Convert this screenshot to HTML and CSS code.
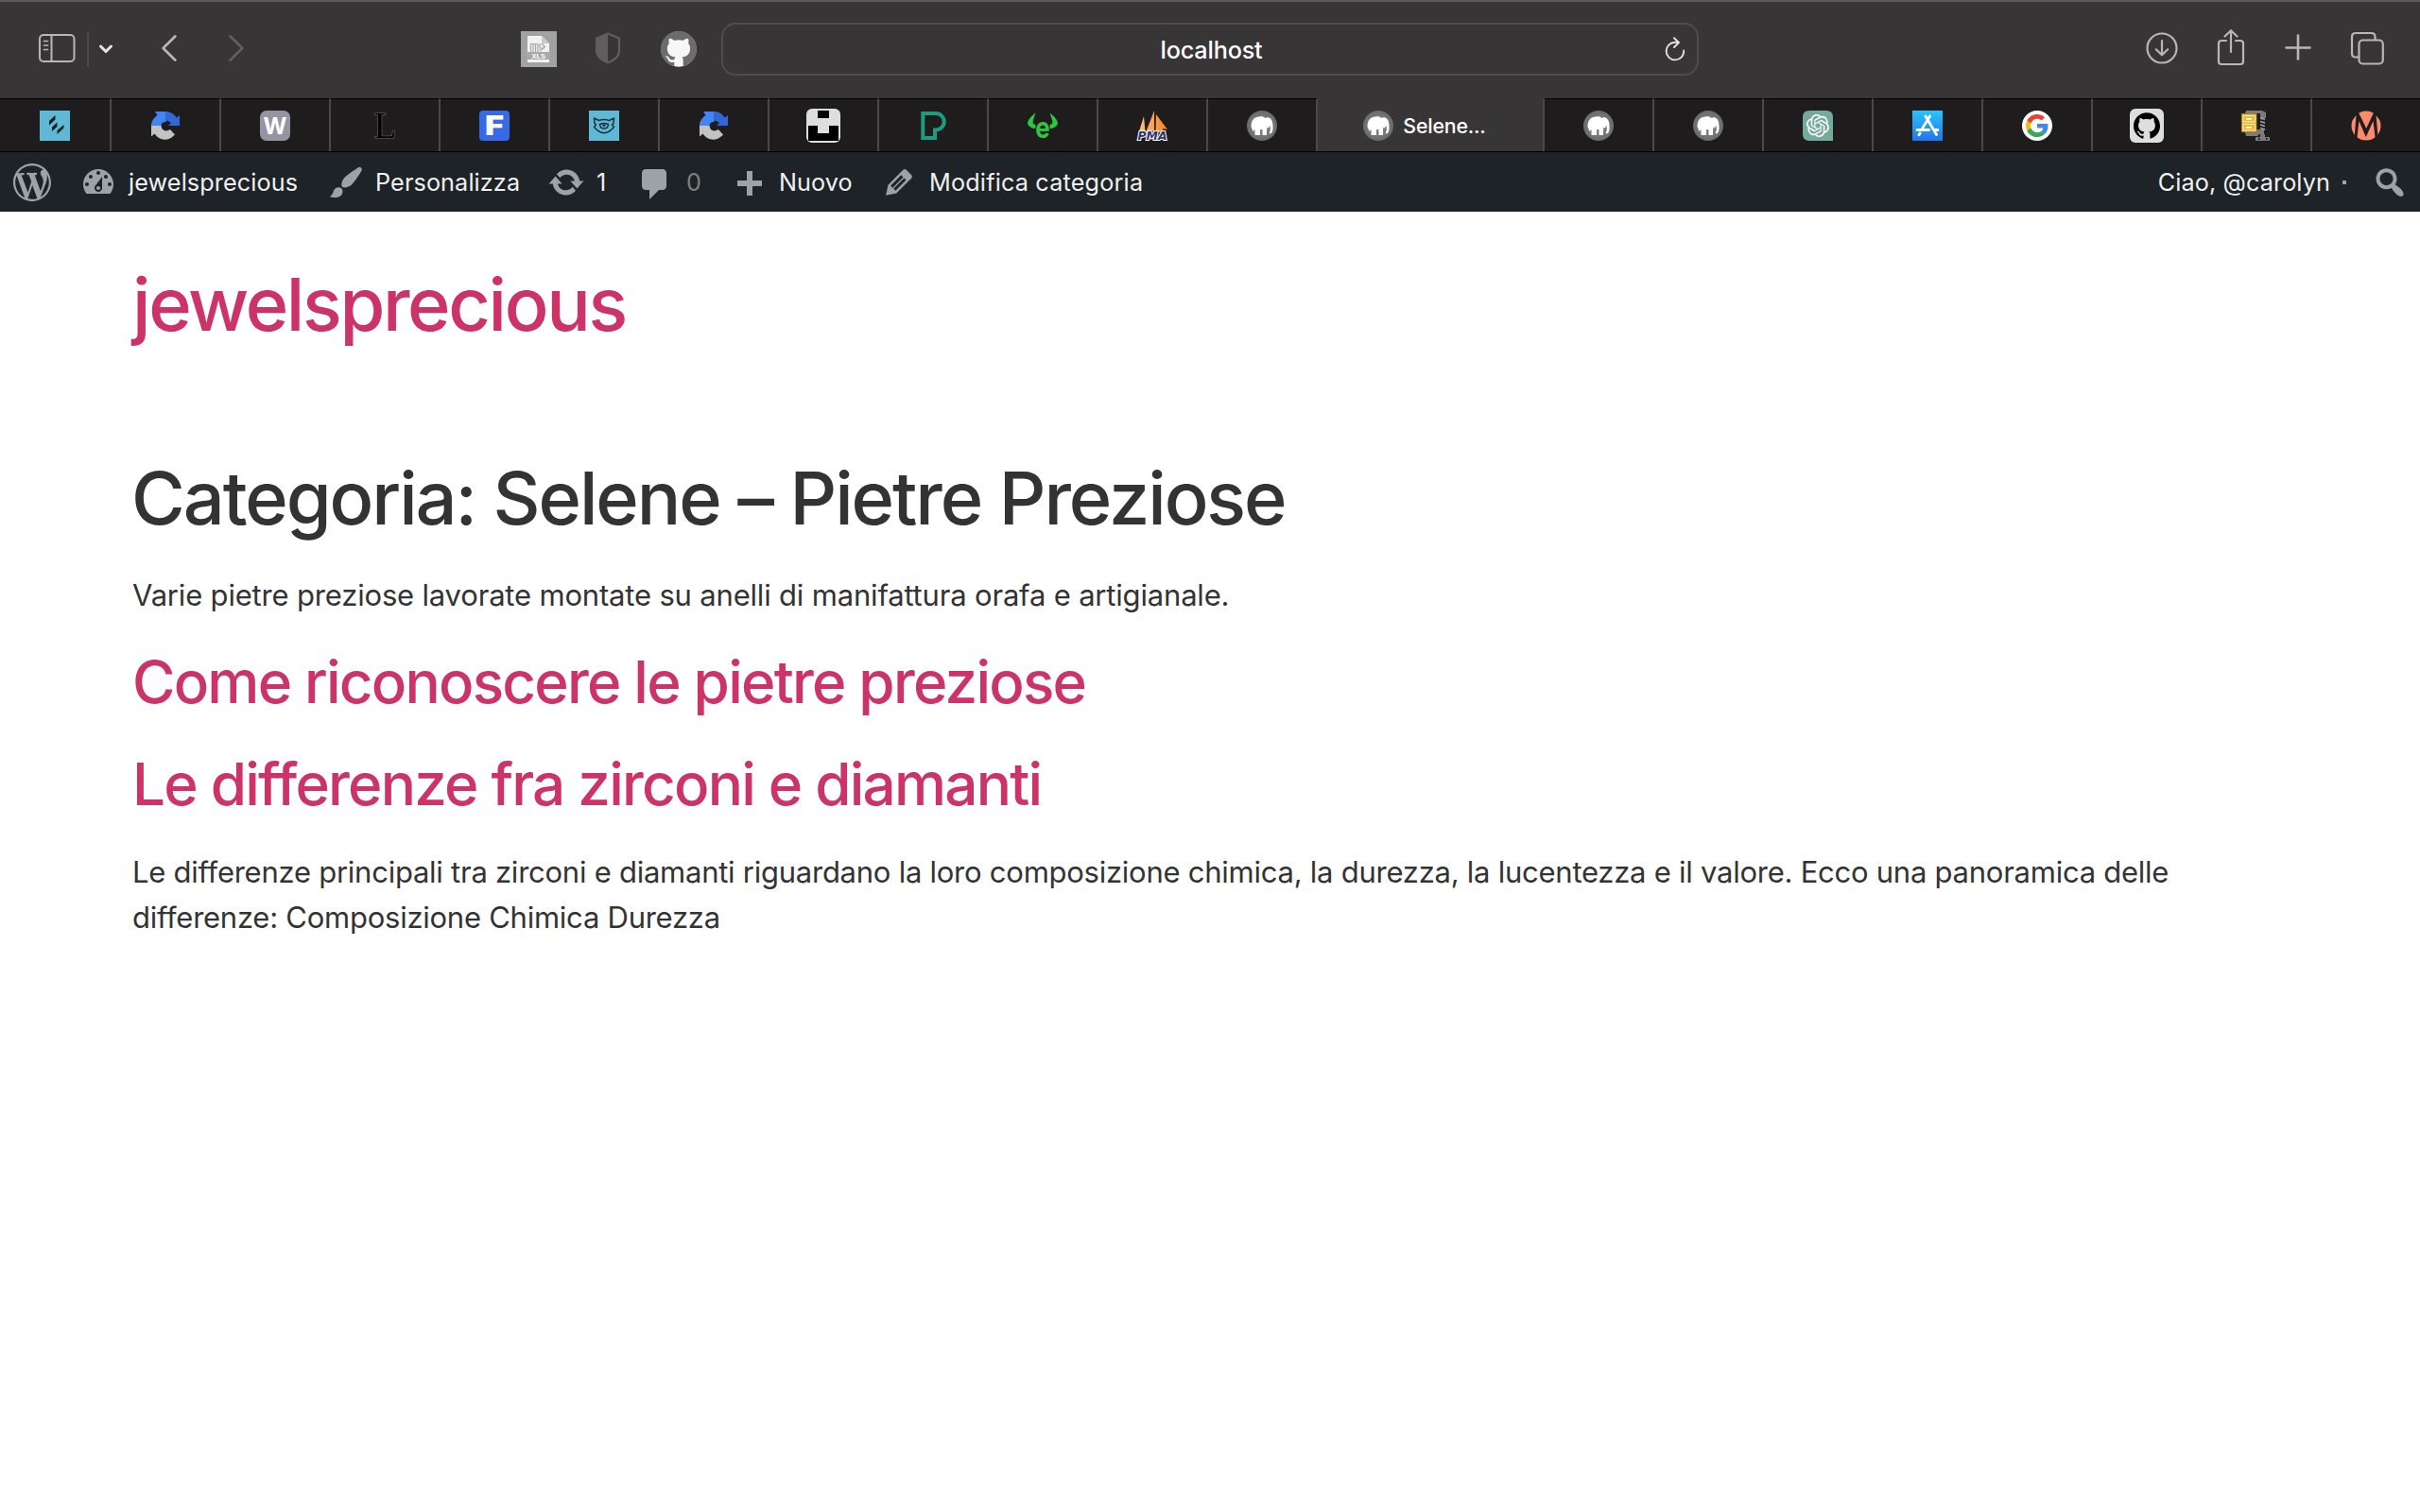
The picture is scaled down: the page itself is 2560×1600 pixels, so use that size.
FILE: index.html
```html
<!DOCTYPE html>
<html lang="it">
<head>
<meta charset="utf-8">
<title>Selene – Pietre Preziose</title>
<link rel="stylesheet" href="styles.css">
</head>
<body>
<svg class="sprite" width="0" height="0" aria-hidden="true">
  <defs>
    <radialGradient id="disc" cx=".5" cy=".5" r=".5"><stop offset=".3" stop-color="#858585"/><stop offset="1" stop-color="#6a6a6a"/></radialGradient>
    <linearGradient id="sky" x1="0" y1="0" x2="0" y2="1"><stop offset="0" stop-color="#2ac4fb"/><stop offset="1" stop-color="#2374ee"/></linearGradient>
    <linearGradient id="sail" x1="0" y1="0" x2="1" y2="0"><stop offset="0" stop-color="#fbc27a"/><stop offset="1" stop-color="#f7811e"/></linearGradient>
    <clipPath id="round"><circle cx="16" cy="16" r="15.5"/></clipPath>
  </defs>
  <symbol id="cycle" viewBox="0 0 32 32">
    <path fill="#4285f4" d="M5 1H16V12A4.6 4.6 0 0 0 11.5 16H1C1 11.500 3.500 7.500 7.500 5z"/>
    <path fill="#3367d6" d="M16 1C21 1 25 3.200 27.600 7.500L31 5V16H19L22 13L18 10.500L16 12z"/>
    <path fill="#c3c3c3" d="M1 16H11.500C11.800 20 14.500 22 18 21.300L21 20L26 25.500C19 33.500 9 31.500 4.500 24.500L1 27.500z"/>
  </symbol>
  <symbol id="elephant" viewBox="0 0 32 32">
    <circle cx="16" cy="16" r="16" fill="url(#disc)"/>
    <path fill="#fff" d="M4.500 17C4.500 10 8 6.500 13 6.500C15.500 6 18 6.300 19.500 8C23 6 27 9 27.300 14C27.700 18 28 22 25.700 24C24.500 25 23.300 24 24 22.700C25.300 21 25 18 24.300 15.500C23.700 18.500 22 19 21 18V26H16.500V20H14V26H8.500V20L6.500 22z"/>
  </symbol>
  <symbol id="octocat" viewBox="0 0 24 24">
    <path d="M12 .297c-6.63 0-12 5.373-12 12 0 5.303 3.438 9.8 8.205 11.385.6.113.82-.258.82-.577 0-.285-.01-1.04-.015-2.04-3.338.724-4.042-1.61-4.042-1.61C4.422 18.07 3.633 17.7 3.633 17.7c-1.087-.744.084-.729.084-.729 1.205.084 1.838 1.236 1.838 1.236 1.07 1.835 2.809 1.305 3.495.998.108-.776.417-1.305.76-1.605-2.665-.3-5.466-1.332-5.466-5.93 0-1.31.465-2.38 1.235-3.22-.135-.303-.54-1.523.105-3.176 0 0 1.005-.322 3.3 1.23.96-.267 1.98-.399 3-.405 1.02.006 2.04.138 3 .405 2.28-1.552 3.285-1.23 3.285-1.23.645 1.653.24 2.873.12 3.176.765.84 1.23 1.91 1.23 3.22 0 4.61-2.805 5.625-5.475 5.92.42.36.81 1.096.81 2.22 0 1.606-.015 2.896-.015 3.286 0 .315.21.69.825.57C20.565 22.092 24 17.592 24 12.297c0-6.627-5.373-12-12-12"/>
  </symbol>
</svg>

<header class="toolbar">
  <div class="tools tools-left">
    <svg class="i-sidebar" width="40" height="32" viewBox="0 0 40 32" fill="none" stroke="#b9b6b7" stroke-width="2"><rect x="2" y="2" width="36.500" height="28" rx="4"/><path d="M14.500 2V30"/><path stroke-width="1.700" stroke-linecap="round" d="M6.500 8.500H10.500M6.500 13H10.500M6.500 17.500H10.500"/></svg>
    <span class="divider"></span>
    <svg class="i-down" width="16" height="12" viewBox="0 0 16 12" fill="none" stroke="#e6e4e5" stroke-width="3" stroke-linecap="round" stroke-linejoin="round"><path d="M2.500 3L8 8.500L13.500 3"/></svg>
    <svg class="i-back" width="18" height="30" viewBox="0 0 18 30" fill="none" stroke="#b9b6b7" stroke-width="2.600" stroke-linecap="round" stroke-linejoin="round"><path d="M15.500 2.300L2.600 15L15.500 27.700"/></svg>
    <svg class="i-forward" width="18" height="30" viewBox="0 0 18 30" fill="none" stroke="#605e5f" stroke-width="2.600" stroke-linecap="round" stroke-linejoin="round"><path d="M2.500 2.300L15.400 15L2.500 27.700"/></svg>
    <svg class="i-xls" width="38" height="38" viewBox="0 0 38 38"><path fill="#a2a2a2" d="M0 0H38V38H0z"/><path fill="#f2f2f2" d="M7 5H22L30 13V33H7z"/><path fill="#c9c9c9" d="M22 5L30 13H22z"/><path fill="none" stroke="#a8a8a8" stroke-width="1.200" d="M10.500 22V13.500H18V22M13 14V22M15.500 14V22M20 14H24V18H20zM20 21L26 16"/><path fill="#a9a9a9" d="M6 22H31V30H6z"/><text x="18.700" y="29" text-anchor="middle" class="t-xls">XLS</text></svg>
    <svg class="i-shield" width="28" height="34" viewBox="0 0 28 34"><path fill="none" stroke="#5f5d5e" stroke-width="2.200" stroke-linejoin="round" d="M14 1.500L26 6.500V20C26 26 20 30 14 32.200C8 30 2 26 2 20V6.500z"/><path fill="#5f5d5e" d="M14 1.500V32.200C8 30 2 26 2 20V6.500z"/></svg>
    <svg class="i-git" width="38" height="38" viewBox="0 0 38 38"><circle cx="19" cy="19" r="18.700" fill="#f7f7f7"/><use href="#octocat" x="0" y="-.5" width="38" height="38" fill="#6d6b6c"/></svg>
  </div>
  <div class="address">
    <span class="address-text">localhost</span>
    <svg class="i-reload" width="24" height="28" viewBox="0 0 24 28" fill="none" stroke="#e2e0e1" stroke-width="1.900" stroke-linecap="round" stroke-linejoin="round"><path d="M21.200 15.500A9.300 9.300 0 1 1 11.900 6.800H15.800M11 2.200L16 7L11 12"/></svg>
  </div>
  <div class="tools tools-right">
    <svg class="i-download" width="34" height="34" viewBox="0 0 34 34" fill="none" stroke="#b9b6b7" stroke-width="2.200" stroke-linecap="round" stroke-linejoin="round"><circle cx="17" cy="17" r="15.500"/><path d="M17 9V24M10.800 18.300L17 24.300L23.200 18.300"/></svg>
    <svg class="i-share" width="30" height="40" viewBox="0 0 30 40" fill="none" stroke="#b9b6b7" stroke-width="2.200" stroke-linecap="round" stroke-linejoin="round"><path d="M10 13H5Q2 13 2 16V35Q2 38 5 38H25Q28 38 28 35V16Q28 13 25 13H20M15 25V2.500M8.500 8.500L15 2.200L21.500 8.500"/></svg>
    <svg class="i-plus" width="28" height="28" viewBox="0 0 28 28" fill="none" stroke="#b9b6b7" stroke-width="2.600" stroke-linecap="round"><path d="M14 1.500V26.500M1.500 14.500H26.500"/></svg>
    <svg class="i-tabs" width="36" height="36" viewBox="0 0 36 36" fill="none" stroke="#b9b6b7" stroke-width="2.200"><rect x="9.500" y="9.500" width="25.300" height="25" rx="4"/><path d="M9.500 27.500H6Q2 27.500 2 23.500V6Q2 2 6 2H22.500Q26.500 2 26.500 6V9.500"/></svg>
  </div>
</header>

<nav class="tabs">
  <div class="tab first"><svg class="fav" viewBox="0 0 32 32"><path fill="#5fb9d4" d="M0 0H32V32H0z"/><path fill="#1d1f22" d="M10 11L16.500 5V9.500L10 15.500zM13 17.500L18.500 12.500V17L13 22zM18.500 21L25.500 15V18.500L18.500 25z"/></svg></div>
  <div class="tab"><svg class="fav"><use href="#cycle"/></svg></div>
  <div class="tab"><svg class="fav" viewBox="0 0 32 32"><rect width="32" height="32" rx="7" fill="#9494a2"/><text x="16" y="25" text-anchor="middle" class="t-w">W</text></svg></div>
  <div class="tab"><svg class="fav" viewBox="0 0 32 32"><text x="16.500" y="29" text-anchor="middle" class="t-l">L</text></svg></div>
  <div class="tab"><svg class="fav" viewBox="0 0 32 32"><rect width="32" height="32" rx="4" fill="#356be6"/><text x="16" y="26" text-anchor="middle" class="t-f" textLength="20" lengthAdjust="spacingAndGlyphs">F</text></svg></div>
  <div class="tab"><svg class="fav" viewBox="0 0 32 32"><path fill="#5fb9d4" d="M0 0H32V32H0z"/><path fill="none" stroke="#20343b" stroke-width="1.600" stroke-linejoin="round" d="M5.500 8L10.500 10.500Q16 8.500 21.500 10.500L26.500 8L26 13.500L24.500 15L26.500 17.500L24 20Q16 27.500 8 20L5.500 17.500L7.500 15L6 13.500zM11.500 14.500Q16 12.500 20.500 14.500Q20 19 16 19Q12 19 11.500 14.500z"/><path fill="#20343b" d="M13.500 14.500H18.500L16 17.500z"/></svg></div>
  <div class="tab"><svg class="fav"><use href="#cycle"/></svg></div>
  <div class="tab"><svg class="fav big" viewBox="0 0 36 36"><rect width="36" height="36" rx="6" fill="#dedede"/><path d="M12 2H24V10H12zM2 18H12V26H24V18H34V34H2z"/></svg></div>
  <div class="tab"><svg class="fav" viewBox="0 0 32 32"><path fill="none" stroke="#1d9d80" stroke-width="4" d="M5.300 3H19A8.600 8.600 0 0 1 19 20.500H18V29H5.300z"/></svg></div>
  <div class="tab"><svg class="fav" viewBox="0 0 32 32" fill="#2ac840"><path d="M8.500 2.500C4 6 0 10 0 14C1.500 17.500 4.500 19 8.500 19V15Q4.500 14.500 6 10zM23.500 2.500C28 6 32 10 32 14C30.500 17.500 27.500 19 23.500 19V15Q27.500 14.500 26 10z"/><text x="16" y="28.500" text-anchor="middle" class="t-e" textLength="15.500" lengthAdjust="spacingAndGlyphs">e</text></svg></div>
  <div class="tab"><svg class="fav" viewBox="0 0 32 32"><path fill="url(#sail)" d="M7 6L8.500 22H2zM18 0V22H9.500zM20 4L32 20L27 19L28 23H19.500z"/><text x="16" y="31" text-anchor="middle" class="t-pma" textLength="31" lengthAdjust="spacingAndGlyphs">PMA</text></svg></div>
  <div class="tab"><svg class="fav"><use href="#elephant"/></svg></div>
  <div class="tab active"><svg class="fav"><use href="#elephant"/></svg><span class="tab-title">Selene...</span></div>
  <div class="tab"><svg class="fav"><use href="#elephant"/></svg></div>
  <div class="tab"><svg class="fav"><use href="#elephant"/></svg></div>
  <div class="tab"><svg class="fav" viewBox="0 0 32 32"><path fill="#74aa9c" d="M7 0H25Q32 0 32 7V32H7Q0 32 0 25V7Q0 0 7 0z"/><svg x="4" y="4" width="24" height="24" viewBox="0 0 24 24"><path fill="#fff" d="M22.2819 9.8211a5.9847 5.9847 0 0 0-.5157-4.9108 6.0462 6.0462 0 0 0-6.5098-2.9A6.0651 6.0651 0 0 0 4.9807 4.1818a5.9847 5.9847 0 0 0-3.9977 2.9 6.0462 6.0462 0 0 0 .7427 7.0966 5.98 5.98 0 0 0 .511 4.9107 6.051 6.051 0 0 0 6.5146 2.9001A5.9847 5.9847 0 0 0 13.2599 24a6.0557 6.0557 0 0 0 5.7718-4.2058 5.9894 5.9894 0 0 0 3.9977-2.9001 6.0557 6.0557 0 0 0-.7475-7.0729zm-9.022 12.6081a4.4755 4.4755 0 0 1-2.8764-1.0408l.1419-.0804 4.7783-2.7582a.7948.7948 0 0 0 .3927-.6813v-6.7369l2.02 1.1686a.071.071 0 0 1 .038.052v5.5826a4.504 4.504 0 0 1-4.4945 4.4944zm-9.6607-4.1254a4.4708 4.4708 0 0 1-.5346-3.0137l.142.0852 4.783 2.7582a.7712.7712 0 0 0 .7806 0l5.8428-3.3685v2.3324a.0804.0804 0 0 1-.0332.0615L9.74 19.9502a4.4992 4.4992 0 0 1-6.1408-1.6464zM2.3408 7.8956a4.485 4.485 0 0 1 2.3655-1.9728V11.6a.7664.7664 0 0 0 .3879.6765l5.8144 3.3543-2.0201 1.1685a.0757.0757 0 0 1-.071 0l-4.8303-2.7865A4.504 4.504 0 0 1 2.3408 7.872zm16.5963 3.8558L13.1038 8.364 15.1192 7.2a.0757.0757 0 0 1 .071 0l4.8303 2.7913a4.4944 4.4944 0 0 1-.6765 8.1042v-5.6772a.79.79 0 0 0-.407-.667zm2.0107-3.0231l-.142-.0852-4.7735-2.7818a.7759.7759 0 0 0-.7854 0L9.409 9.2297V6.8974a.0662.0662 0 0 1 .0284-.0615l4.8303-2.7866a4.4992 4.4992 0 0 1 6.6802 4.66zM8.3065 12.863l-2.02-1.1638a.0804.0804 0 0 1-.038-.0567V6.0742a4.4992 4.4992 0 0 1 7.3757-3.4537l-.142.0805L8.704 5.459a.7948.7948 0 0 0-.3927.6813zm1.0976-2.3654l2.602-1.4998 2.6069 1.4998v2.9994l-2.5974 1.4997-2.6067-1.4997Z"/></svg></svg></div>
  <div class="tab"><svg class="fav" viewBox="0 0 32 32"><path fill="url(#sky)" d="M0 0H32V32H0z"/><path fill="none" stroke="#fff" stroke-width="2.800" stroke-linecap="round" d="M18.500 6L9.500 20.500M14 6L25.500 25.500M5 20.500H17.500M22.500 20.500H27M8 24L7 25.700"/></svg></div>
  <div class="tab"><svg class="fav" viewBox="0 0 32 32"><circle cx="16" cy="16" r="16" fill="#fff"/><svg x="4" y="4" width="24" height="24" viewBox="0 0 48 48"><path fill="#EA4335" d="M24 9.500c3.540 0 6.710 1.220 9.210 3.600l6.850-6.850C35.900 2.380 30.470 0 24 0 14.620 0 6.510 5.380 2.560 13.220l7.980 6.190C12.430 13.720 17.740 9.500 24 9.500z"/><path fill="#4285F4" d="M46.980 24.550c0-1.570-.15-3.090-.38-4.550H24v9.020h12.940c-.58 2.960-2.260 5.480-4.780 7.180l7.730 6c4.510-4.180 7.090-10.360 7.090-17.650z"/><path fill="#FBBC05" d="M10.530 28.590c-.48-1.450-.76-2.990-.76-4.590s.27-3.140.76-4.590l-7.980-6.190C.92 16.460 0 20.120 0 24c0 3.880.92 7.540 2.560 10.780l7.970-6.190z"/><path fill="#34A853" d="M24 48c6.480 0 11.930-2.130 15.890-5.810l-7.730-6c-2.150 1.450-4.920 2.300-8.160 2.300-6.260 0-11.570-4.220-13.470-9.910l-7.980 6.190C6.510 42.620 14.620 48 24 48z"/></svg></svg></div>
  <div class="tab"><svg class="fav big" viewBox="0 0 36 36"><rect width="36" height="36" rx="6" fill="#dedede"/><use href="#octocat" x="4" y="4" width="28" height="28"/></svg></div>
  <div class="tab"><svg class="fav" viewBox="0 0 32 32"><path fill="#7b7b7b" d="M5 0H22L26 2V8H20V3H4zM4 23H16V20H24V25H19L17 27H5zM20 25H25V28H30V32H15V28H20z"/><path stroke="#a5a5a5" stroke-width="1.500" d="M20 8L25 9.500M20 11.500L25 13M20 15L25 16.500M20 18.500L25 20"/><path fill="#edb82e" stroke="#b98a1c" stroke-width=".8" d="M.4 3.400H16V22.600H.4z"/><path fill="none" stroke="#fff0bd" stroke-width="1" d="M1.800 5.500H14.500V12H1.800zM1.800 14.500H14.500V21H1.800z"/><path fill="#fff" d="M5 8H11V9.800H5zM5 17H11V18.800H5z"/><path fill="#1f1c1d" d="M18 29H19.500V31H18zM26 29H27.500V31H26z"/></svg></div>
  <div class="tab last"><svg class="fav" viewBox="0 0 32 32"><g clip-path="url(#round)" fill="#fb8b6c"><path d="M7 0H25L16.200 19zM8.500 11L15.800 28L23.500 11L26 32H6zM0 32V12L5.500 5L3.800 27zM32 32V12L26.500 5L28.500 27z"/></g></svg></div>
</nav>

<div class="adminbar">
  <a class="ab ab-logo"><svg class="dash" viewBox="0 0 20 20"><path d="M20 10c0-5.510-4.490-10-10-10C4.480 0 0 4.490 0 10c0 5.520 4.480 10 10 10 5.510 0 10-4.480 10-10zM7.780 15.370L4.370 6.220c.55-.02 1.170-.08 1.170-.08.5-.06.44-1.130-.06-1.110 0 0-1.450.11-2.370.11-.18 0-.37 0-.58-.01C4.120 2.690 6.870 1.110 10 1.110c2.330 0 4.450.87 6.050 2.340-.68-.11-1.650.39-1.650 1.580 0 .74.45 1.360.9 2.100.35.61.55 1.360.55 2.460 0 1.490-1.400 5-1.400 5l-3.030-8.370c.54-.02.82-.17.82-.17.5-.05.44-1.250-.06-1.220 0 0-1.440.12-2.380.12-.87 0-2.330-.12-2.330-.12-.5-.03-.56 1.200-.06 1.220l.92.08 1.260 3.410zM17.410 10c.24-.64.74-1.870.43-4.250.7 1.290 1.050 2.710 1.050 4.250 0 3.290-1.730 6.240-4.400 7.780.97-2.590 1.940-5.200 2.920-7.780zM6.100 18.090C3.120 16.650 1.110 13.530 1.110 10c0-1.300.23-2.480.72-3.590C3.250 10.300 4.670 14.200 6.100 18.090zM10.130 11.460l2.580 6.980c-.86.29-1.760.45-2.710.45-.79 0-1.570-.11-2.290-.33.81-2.380 1.620-4.740 2.420-7.100z"/></svg></a>
  <a class="ab ab-site"><svg class="dash" viewBox="0 0 20 20"><path fill-rule="evenodd" d="M3.760 16h12.480c1.100-1.370 1.760-3.110 1.760-5 0-4.420-3.580-8-8-8s-8 3.580-8 8c0 1.890.66 3.630 1.760 5zM10 4c.55 0 1 .45 1 1s-.45 1-1 1-1-.45-1-1 .45-1 1-1zM6 6c.55 0 1 .45 1 1s-.45 1-1 1-1-.45-1-1 .45-1 1-1zm8 0c.55 0 1 .45 1 1s-.45 1-1 1-1-.45-1-1 .45-1 1-1zm-5.370 5.550L12 7v6c0 1.100-.9 2-2 2s-2-.9-2-2c0-.57.24-1.080.63-1.450zM4 10c.55 0 1 .45 1 1s-.45 1-1 1-1-.45-1-1 .45-1 1-1zm12 0c.55 0 1 .45 1 1s-.45 1-1 1-1-.45-1-1 .45-1 1-1zm-5 3c0-.55-.45-1-1-1s-1 .45-1 1 .45 1 1 1 1-.45 1-1z"/></svg><span>jewelsprecious</span></a>
  <a class="ab ab-custom"><svg class="dash" viewBox="0 0 20 20"><path d="M18.330 3.570s.27-.8-.31-1.360c-.53-.52-1.220-.24-1.220-.24-.61.3-5.760 3.470-7.670 5.570-.86.96-2.060 3.790-1.090 4.820.92.98 3.960-.17 4.790-1 2.060-2.060 5.210-7.170 5.500-7.790zM1.400 17.650c2.370-1.560 1.460-3.410 3.230-4.640.93-.65 2.220-.62 3.080.29.63.67.8 2.570-.16 3.460-1.570 1.450-4 1.550-6.150.89z"/></svg><span>Personalizza</span></a>
  <a class="ab ab-update"><svg class="dash" viewBox="0 0 20 20"><path d="M10.200 3.280c3.530 0 6.430 2.610 6.920 6h2.080l-3.500 4-3.500-4h2.320c-.45-1.970-2.210-3.450-4.320-3.450-1.450 0-2.730.71-3.540 1.780L4.950 5.660C6.230 4.200 8.110 3.280 10.200 3.280zm-.4 13.440c-3.520 0-6.430-2.610-6.920-6H.8l3.500-4c1.170 1.330 2.330 2.670 3.500 4H5.480c.45 1.970 2.210 3.450 4.320 3.450 1.450 0 2.730-.71 3.540-1.780l1.710 1.950c-1.280 1.460-3.150 2.380-5.250 2.380z"/></svg><span>1</span></a>
  <a class="ab ab-comments"><svg class="dash low" viewBox="0 0 20 20"><path d="M5 2h9c1.100 0 2 .9 2 2v7c0 1.100-.9 2-2 2h-2l-5 5v-5H5c-1.100 0-2-.9-2-2V4c0-1.100.9-2 2-2z"/></svg><span>0</span></a>
  <a class="ab ab-new"><svg class="dash lower" viewBox="0 0 20 20"><path d="M17 7v3h-5v5H9v-5H4V7h5V2h3v5h5z"/></svg><span>Nuovo</span></a>
  <a class="ab ab-edit"><svg class="dash" viewBox="0 0 20 20"><path fill-rule="evenodd" d="M13.890 3.390l2.710 2.720c.46.46.42 1.240.03 1.640l-8.010 8.020-5.560 1.160 1.160-5.580s7.600-7.630 7.990-8.030c.39-.39 1.220-.39 1.680.07zm-2.730 2.790l-5.590 5.610 1.110 1.110 5.540-5.650zm-2.970 8.230l5.580-5.600-1.070-1.080-5.590 5.600z"/></svg><span>Modifica categoria</span></a>
  <a class="ab ab-account"><span>Ciao, @carolyn</span><i class="avatar"></i></a>
  <a class="ab ab-search"><svg class="dash" viewBox="0 0 20 20"><path fill-rule="evenodd" d="M12.140 4.180c1.870 1.870 2.110 4.750.72 6.890.12.1.22.21.36.31.2.16.47.36.81.59.34.24.56.39.66.47.42.31.73.57.94.78.32.32.6.65.84 1 .25.35.44.69.59 1.040.14.35.21.68.18 1-.02.32-.14.59-.36.81s-.49.34-.81.36c-.31.02-.65-.04-.99-.19-.35-.14-.7-.34-1.040-.59-.35-.24-.68-.52-1-.84-.21-.21-.47-.52-.77-.93-.1-.13-.25-.35-.47-.66-.22-.32-.4-.57-.56-.78-.16-.2-.29-.35-.44-.5-2.070 1.090-4.690.76-6.440-.98-2.140-2.150-2.140-5.640 0-7.780 2.150-2.150 5.630-2.150 7.780 0zm-1.410 6.360c1.360-1.370 1.360-3.580 0-4.950-1.370-1.370-3.590-1.370-4.950 0-1.370 1.370-1.370 3.580 0 4.950 1.360 1.370 3.580 1.370 4.950 0z"/></svg></a>
</div>

<main class="page">
  <div class="site-title">jewelsprecious</div>
  <h1>Categoria: Selene – Pietre Preziose</h1>
  <p class="intro">Varie pietre preziose lavorate montate su anelli di manifattura orafa e artigianale.</p>
  <h2 class="post-a">Come riconoscere le pietre preziose</h2>
  <h2 class="post-b">Le differenze fra zirconi e diamanti</h2>
  <p class="excerpt">Le differenze principali tra zirconi e diamanti riguardano la loro composizione chimica, la durezza, la lucentezza e il valore. Ecco una panoramica delle<br>differenze: Composizione Chimica Durezza</p>
</main>
</body>
</html>
```
FILE: styles.css
```css
* { box-sizing: border-box; }
html, body { margin: 0; height: 100%; }
body { background: #fff; color: #333; font-family: Inter, "Liberation Sans", sans-serif; }
svg { display: block; flex: none; }
.sprite { width: 0; height: 0; }

.toolbar { display: flex; height: 104px; background: #383536; border-top: 2px solid #5b595a; }
.tools { display: flex; align-items: flex-start; }
.tools-left { width: 763px; }
.i-sidebar { margin: 33px 0 0 40px; }
.divider { width: 2px; height: 36px; margin: 32px 0 0 12px; background: #4b494a; }
.i-down { margin: 44px 0 0 10px; }
.i-back { margin: 34px 0 0 50px; }
.i-forward { margin: 34px 0 0 53px; }
.i-xls { margin: 31px 0 0 292px; }
.i-shield { margin: 32px 0 0 40px; }
.i-git { margin: 31px 0 0 42px; }
.t-xls { font: 700 7.5px "Liberation Sans", sans-serif; fill: #fff; }
.address { display: grid; grid-template-columns: 1fr auto 1fr; align-items: center; width: 1034px; height: 56px; margin-top: 22px; border: 2px solid #4e4c4d; border-radius: 15px; }
.address-text { grid-column: 2; font-size: 25.2px; font-weight: 500; letter-spacing: -.17px; color: #fff; padding: 2px 0 0 3px; }
.i-reload { justify-self: end; margin-right: 11px; }
.tools-right { flex: 1; }
.i-download { margin: 32px 0 0 473px; }
.i-share { margin: 28px 0 0 41px; }
.i-plus { margin: 34px 0 0 42px; }
.i-tabs { margin: 31px 0 0 41px; }

.tabs { display: flex; height: 57px; border-bottom: 1px solid #000; background: #1f1c1d; }
.tab { display: flex; align-items: center; justify-content: center; width: 116px; border-top: 1px solid #000; border-right: 2px solid #4a4849; }
.tab.first { width: 118px; }
.tab.last { width: 114px; border-right: 0; }
.tab.active { width: 240px; background: #383536; border-top-color: #383536; padding-right: 12px; gap: 10px; }
.fav { width: 32px; height: 32px; overflow: visible; }
.fav.big { width: 36px; height: 36px; }
.tab-title { font-size: 21.3px; font-weight: 500; letter-spacing: -.17px; color: #fff; }
.t-w { font: 700 24px Inter, sans-serif; fill: #fff; }
.t-l { font: 39px "Liberation Serif", serif; fill: #000; stroke: #6a6869; stroke-width: 1.2px; paint-order: stroke; }
.t-f { font: 900 28px Inter, sans-serif; fill: #fff; }
.t-e { font: 700 31px Inter, sans-serif; }
.t-pma { font: italic 700 12px "DejaVu Sans", sans-serif; fill: #33336b; stroke: #fff; stroke-width: 2px; paint-order: stroke; }

.adminbar { display: flex; height: 63px; background: #1d2327; color: #f0f0f1; font-size: 25.2px; letter-spacing: .12px; }
.ab { display: flex; align-items: center; white-space: nowrap; }
.dash { width: 40px; height: 40px; fill: #9ca2a7; }
.dash.low { margin-top: 4px; }
.dash.lower { margin-top: 8px; }
.ab-logo { width: 84px; padding-left: 14px; }
.ab-site { width: 262px; gap: 12px; }
.ab-custom { width: 233px; gap: 11px; }
.ab-update { width: 94px; gap: 12px; }
.ab-comments { width: 99px; gap: 13px; }
.ab-comments span { color: #7d8184; }
.ab-new { width: 159px; gap: 12px; }
.ab-edit { gap: 12px; letter-spacing: .19px; }
.ab-account { margin-left: auto; gap: 13px; }
.avatar { width: 4px; height: 4px; background: #a0a3a6; }
.ab-search { margin-left: 26px; padding-right: 12px; }

.page { padding: 50px 140px 0; }
.site-title { font-size: 77.5px; line-height: 96px; font-weight: 500; letter-spacing: -2.357px; color: #cc3366; }
h1, h2, p { margin: 0; white-space: nowrap; }
h1 { margin: 109px 0 0 -1px; font-size: 77.5px; line-height: 96px; font-weight: 500; letter-spacing: -2.089px; }
p { font-size: 31px; line-height: 48px; letter-spacing: -.25px; }
.intro { margin-top: 31px; letter-spacing: -.18px; }
h2 { font-size: 62px; line-height: 76px; font-weight: 500; letter-spacing: -1.78px; color: #cc3366; }
.post-a { margin-top: 30px; }
.post-b { margin-top: 32px; }
.excerpt { margin-top: 31px; }
```
